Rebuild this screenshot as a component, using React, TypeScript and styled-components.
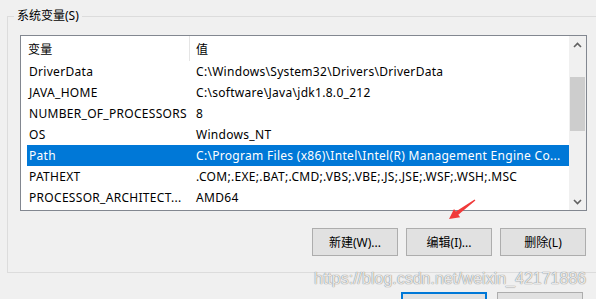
import React from "react";
import styled, { createGlobalStyle } from "styled-components";

const Global = createGlobalStyle`
  html, body { margin: 0; padding: 0; background: #f0f0f0; }
  body { font-family: "Noto Sans", "Noto Sans CJK SC", sans-serif; }
  * { box-sizing: border-box; }
`;

const Page = styled.div`
  position: relative;
  width: 596px;
  height: 299px;
  overflow: hidden;
  background: #f0f0f0;
  padding: 16px 0 0 7px;
  font-size: 12px;
  color: #000;
`;

const GroupBox = styled.div`
  position: relative;
  width: 620px;
  height: 257px;
  border: 1px solid #dcdcdc;
  padding: 18px 0 0 12px;
`;

const GroupTitle = styled.div`
  position: absolute;
  left: 6px;
  top: -10px;
  padding: 0 3px;
  background: #f0f0f0;
  line-height: 18px;
  font-size: 12px;
`;

const ListBox = styled.div`
  display: flex;
  width: 567px;
  height: 176px;
  border: 1px solid #828790;
  background: #fff;
`;

const Rows = styled.div`
  flex: 1;
  padding-left: 6px;
  display: flex;
  flex-direction: column;
  letter-spacing: 0.3px;
`;

const Header = styled.div`
  display: flex;
  height: 25px;
  align-items: center;
`;

const HeaderCell = styled.div<{ $w?: number; $divider?: boolean }>`
  width: ${(p) => (p.$w ? `${p.$w}px` : "auto")};
  flex: ${(p) => (p.$w ? "none" : "1")};
  height: 100%;
  display: flex;
  align-items: center;
  padding-left: ${(p) => (p.$divider ? 1 : 6)}px;
  border-right: ${(p) => (p.$divider ? "1px solid #e5e5e5" : "none")};
  &:first-child { padding-left: 1px; }
`;

const Row = styled.div<{ $sel?: boolean }>`
  display: flex;
  height: 21px;
  align-items: center;
  background: ${(p) => (p.$sel ? "#0078d7" : "transparent")};
  color: ${(p) => (p.$sel ? "#fff" : "#000")};
  white-space: nowrap;
`;

const NameCell = styled.div`
  width: 163px;
  padding-left: 2px;
  overflow: hidden;
`;

const ValueCell = styled.div`
  flex: 1;
  padding-left: 6px;
  overflow: hidden;
`;

const ScrollBar = styled.div`
  width: 17px;
  display: flex;
  flex-direction: column;
  background: #f0f0f0;
`;

const ScrollBtn = styled.div`
  height: 17px;
  display: flex;
  align-items: center;
  justify-content: center;
`;

const Track = styled.div`
  flex: 1;
  padding: 24px 1px 0 1px;
`;

const Thumb = styled.div`
  height: 54px;
  background: #cdcdcd;
`;

const ButtonRow = styled.div`
  display: flex;
  justify-content: flex-end;
  gap: 8px;
  width: 566px;
  margin-top: 17px;
`;

const Button = styled.div<{ $default?: boolean }>`
  width: 86px;
  height: 28px;
  display: flex;
  align-items: center;
  justify-content: center;
  background: #e1e1e1;
  border: ${(p) => (p.$default ? "2px solid #0078d7" : "1px solid #adadad")};
  font-size: 12px;
`;

const BottomRow = styled.div`
  display: flex;
  gap: 10px;
  margin: 19px 0 0 394px;
`;

const Watermark = styled.div`
  position: absolute;
  left: 314px;
  top: 270px;
  font-family: "Liberation Sans", Arial, sans-serif;
  font-size: 16px;
  color: rgba(255, 255, 255, 0.85);
  text-shadow: 0 0 1px rgba(0, 0, 0, 0.45), 0 0 1px rgba(0, 0, 0, 0.3);
  white-space: nowrap;
  pointer-events: none;
`;

const Arrow = styled.svg`
  position: absolute;
  left: 440px;
  top: 195px;
`;

const Chevron = ({ up }: { up?: boolean }) => (
  <svg width="9" height="6" viewBox="0 0 9 6">
    <path
      d={up ? "M1 5 L4.5 1.5 L8 5" : "M1 1 L4.5 4.5 L8 1"}
      fill="none"
      stroke="#606060"
      strokeWidth="1.6"
    />
  </svg>
);

const data: [string, string][] = [
  ["DriverData", "C:\\Windows\\System32\\Drivers\\DriverData"],
  ["JAVA_HOME", "C:\\software\\Java\\jdk1.8.0_212"],
  ["NUMBER_OF_PROCESSORS", "8"],
  ["OS", "Windows_NT"],
  ["Path", "C:\\Program Files (x86)\\Intel\\Intel(R) Management Engine Co..."],
  ["PATHEXT", ".COM;.EXE;.BAT;.CMD;.VBS;.VBE;.JS;.JSE;.WSF;.WSH;.MSC"],
  ["PROCESSOR_ARCHITECT...", "AMD64"],
];

export default function App() {
  return (
    <>
      <Global />
      <Page>
        <GroupBox>
          <GroupTitle>系统变量(S)</GroupTitle>
          <ListBox>
            <Rows>
              <Header>
                <HeaderCell $w={163} $divider>
                  变量
                </HeaderCell>
                <HeaderCell>值</HeaderCell>
              </Header>
              {data.map(([k, v]) => (
                <Row key={k} $sel={k === "Path"}>
                  <NameCell>{k}</NameCell>
                  <ValueCell>{v}</ValueCell>
                </Row>
              ))}
            </Rows>
            <ScrollBar>
              <ScrollBtn>
                <Chevron up />
              </ScrollBtn>
              <Track>
                <Thumb />
              </Track>
              <ScrollBtn>
                <Chevron />
              </ScrollBtn>
            </ScrollBar>
          </ListBox>
          <ButtonRow>
            <Button>新建(W)...</Button>
            <Button>编辑(I)...</Button>
            <Button>删除(L)</Button>
          </ButtonRow>
        </GroupBox>
        <BottomRow>
          <Button $default />
          <Button />
        </BottomRow>
        <Watermark>https://blog.csdn.net/weixin_42171886</Watermark>
        <Arrow width="40" height="28" viewBox="0 0 40 28">
          <polygon
            points="35.4,5.5 18.3,19.7 20.2,22.3 9,24 14,13.9 15.9,16.5 34.6,4.5"
            fill="#f03a3a"
          />
        </Arrow>
      </Page>
    </>
  );
}
